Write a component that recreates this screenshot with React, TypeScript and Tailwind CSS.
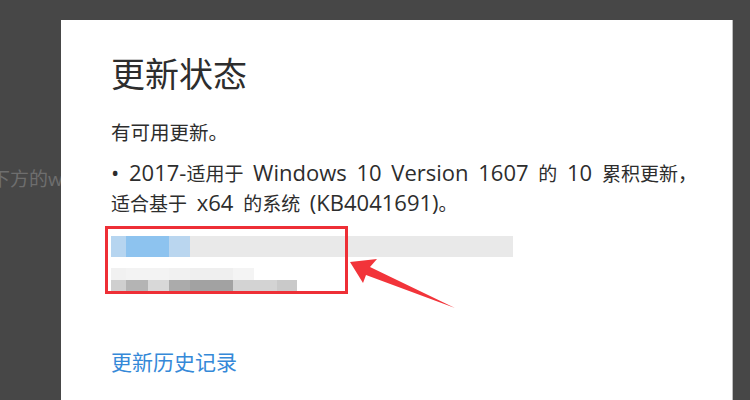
const font = "font-['Open_Sans','Noto_Sans_CJK_SC',sans-serif]";

const blueRow = [
  { w: 15, c: "bg-[#b6d5f0]" },
  { w: 43, c: "bg-[#8dc3ef]" },
  { w: 21, c: "bg-[#bad6ef]" },
];

const faintRow = [
  { w: 15, c: "bg-[#f1f1f1]" },
  { w: 43, c: "bg-[#f3f3f3]" },
  { w: 21, c: "bg-[#f1f1f1]" },
  { w: 43, c: "bg-[#efefef]" },
  { w: 21, c: "bg-[#f4f4f4]" },
];

const grayRow = [
  { w: 15, c: "bg-[#cfcfcf]" },
  { w: 22, c: "bg-[#b4b4b4]" },
  { w: 21, c: "bg-[#d8d8d8]" },
  { w: 21, c: "bg-[#ababab]" },
  { w: 43, c: "bg-[#a2a2a2]" },
  { w: 44, c: "bg-[#d3d3d3]" },
  { w: 20, c: "bg-[#c9c9c9]" },
];

// latin runs are set a bit larger than the CJK runs, as in the screenshot
function L({ children }: { children: React.ReactNode }) {
  return <span className="text-[22px] leading-[28px]">{children}</span>;
}

export default function App() {
  return (
    <div className={`flex h-[400px] w-[750px] overflow-hidden bg-[#474747] ${font}`}>
      <div className="w-[61px] shrink-0 overflow-hidden pt-[165px]">
        <p className="-ml-[9px] whitespace-nowrap text-[19px] text-[#6e6e6e]">下方的windows</p>
      </div>

      <div className="relative mt-[20px] h-[380px] w-[672px] shrink-0 border-r border-[#bdbdbd] bg-white pl-[50px] pt-[30px] text-[#2d2d2d]">
        <h1 className="text-[34px] leading-[48px]">更新状态</h1>

        <p className="mt-[21px] text-[19.5px] leading-[28px]">有可用更新。</p>

        <p className="mt-[11px] text-[19px] leading-[28px] [word-spacing:4px]">
          <L>• 2017-</L>适用于<L> Windows 10 Version 1607 </L>的<L> 10 </L>累积更新，
          <br />
          适合基于<L> x64 </L>的系统<L> (KB4041691)</L>。
        </p>

        <div className="mt-[18px] flex h-[21px] w-[402px] bg-[#e9e9e9]">
          {blueRow.map((b, i) => (
            <div key={i} className={`h-full ${b.c}`} style={{ width: b.w }} />
          ))}
        </div>
        <div className="mt-[11px] flex h-[12px]">
          {faintRow.map((b, i) => (
            <div key={i} className={`h-full ${b.c}`} style={{ width: b.w }} />
          ))}
        </div>
        <div className="flex h-[12px]">
          {grayRow.map((b, i) => (
            <div key={i} className={`h-full ${b.c}`} style={{ width: b.w }} />
          ))}
        </div>

        <a className="mt-[55px] block text-[21px] leading-[30px] text-[#3589d8]">更新历史记录</a>

        {/* annotation: red box + arrow */}
        <div className="absolute left-[44px] top-[206px] h-[68px] w-[243px] border-[3px] border-[#ee2f36]" />
        <svg className="absolute left-0 top-0" width="672" height="380">
          <polygon
            points="289,242 316,239 309,247 394,288 305,255 302,263"
            fill="#f2343a"
          />
        </svg>
      </div>
    </div>
  );
}
